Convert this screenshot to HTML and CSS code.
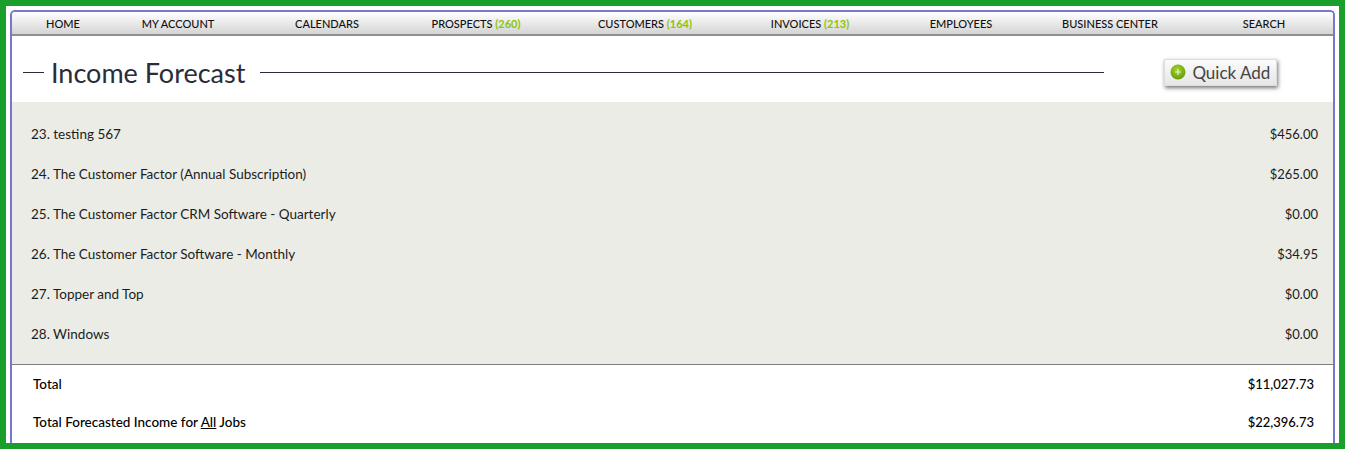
FILE: index.html
```html
<!DOCTYPE html>
<html lang="en">
<head>
    <meta charset="UTF-8">
    <meta name="viewport" content="width=device-width, initial-scale=1.0">
    <title>Income Forecast</title>
    <link rel="stylesheet" href="styles.css">
</head>
<body>

<div class="container">
    <div class="menu">
        <a>HOME</a>
        <a>MY ACCOUNT</a>
        <a>CALENDARS</a>
        <a>PROSPECTS <span class="count">(260)</span></a>
        <a>CUSTOMERS <span class="count">(164)</span></a>
        <a>INVOICES <span class="count">(213)</span></a>
        <a>EMPLOYEES</a>
        <a>BUSINESS CENTER</a>
        <a>SEARCH</a>
    </div>

    <div class="title-bar">
        <div class="title-dash"></div>
        <h1>Income Forecast</h1>
        <div class="title-line"></div>
        <div class="quick-add">
            <svg class="plus-icon" width="16" height="16" viewBox="0 0 16 16">
                <defs>
                    <radialGradient id="plusFill" cx="45%" cy="35%" r="70%">
                        <stop offset="0" stop-color="#a5d32a"/>
                        <stop offset="1" stop-color="#5f9a08"/>
                    </radialGradient>
                </defs>
                <circle cx="8" cy="8" r="7.5" fill="url(#plusFill)"/>
                <path d="M8 5v6M5 8h6" stroke="#e8f4c8" stroke-width="1.2"/>
            </svg>
            Quick Add
        </div>
    </div>

    <div class="rows">
        <div class="row"><span>23. testing 567</span><span>$456.00</span></div>
        <div class="row"><span>24. The Customer Factor (Annual Subscription)</span><span>$265.00</span></div>
        <div class="row"><span>25. The Customer Factor CRM Software - Quarterly</span><span>$0.00</span></div>
        <div class="row"><span>26. The Customer Factor Software - Monthly</span><span>$34.95</span></div>
        <div class="row"><span>27. Topper and Top</span><span>$0.00</span></div>
        <div class="row"><span>28. Windows</span><span>$0.00</span></div>
    </div>

    <div class="totals">
        <div class="total-row"><span>Total</span><span>$11,027.73</span></div>
        <div class="total-row"><span>Total Forecasted Income for <u>All</u> Jobs</span><span>$22,396.73</span></div>
    </div>
</div>

</body>
</html>
```
FILE: styles.css
```css
html, body {
    margin: 0;
    height: 100%;
}
body {
    box-sizing: border-box;
    height: 449px;
    overflow: hidden;
    border: 6px solid #1a9f2d;
    padding: 4px 4px 0 4px;
    background-color: #ffffff;
    font-family: "Lato", "Noto Sans", sans-serif;
    color: #1c1c1c;
}
.container {
    box-sizing: border-box;
    height: 100%;
    border: 2px solid #7777d0;
    border-bottom: none;
    border-radius: 5px 5px 0 0;
    overflow: hidden;
}
.menu {
    box-sizing: border-box;
    height: 24px;
    padding-left: 27px;
    display: grid;
    grid-template-columns: 48px 182px 116px 182px 156px 174px 128px 170px 138px;
    align-items: center;
    border-bottom: 2px solid #8f8f8f;
    background: linear-gradient(to bottom, #ffffff, #d4d4d4);
    font-size: 11px;
    font-weight: 500;
    color: #111;
}
.menu a {
    text-align: center;
    white-space: nowrap;
}
.count {
    color: #8cc400;
    font-weight: 700;
}
.title-bar {
    box-sizing: border-box;
    height: 66px;
    display: flex;
    align-items: center;
    padding: 6px 0 0 11px;
}
.title-dash {
    width: 21px;
    height: 1px;
    background-color: #2b2b3a;
}
h1 {
    margin: 0 15px 0 7px;
    font-size: 27px;
    font-weight: 400;
    color: #2b2b3a;
    white-space: nowrap;
}
.title-line {
    width: 844px;
    height: 1px;
    background-color: #2b2b3a;
}
.quick-add {
    box-sizing: border-box;
    margin-left: 60px;
    width: 113px;
    height: 27px;
    display: flex;
    align-items: center;
    gap: 6px;
    padding-left: 5px;
    border: 1px solid #ddd;
    background: linear-gradient(to bottom, #fbfbfb, #e6e6e6);
    box-shadow: 1px 2px 4px rgba(0, 0, 0, 0.55);
    font-size: 17px;
    color: #444;
    white-space: nowrap;
}
.rows {
    box-sizing: border-box;
    height: 263px;
    padding: 12px 15px 0 19px;
    background-color: #ebece5;
    border-bottom: 1px solid #7d7d7d;
}
.row {
    height: 40px;
    display: flex;
    justify-content: space-between;
    align-items: center;
    font-size: 13.5px;
}
.row span:last-child,
.total-row span:last-child {
    font-size: 13px;
}
.totals {
    padding: 0 19px 0 21px;
}
.total-row {
    height: 38px;
    display: flex;
    justify-content: space-between;
    align-items: center;
    font-size: 13.5px;
    font-weight: 500;
    color: #000;
}
```
